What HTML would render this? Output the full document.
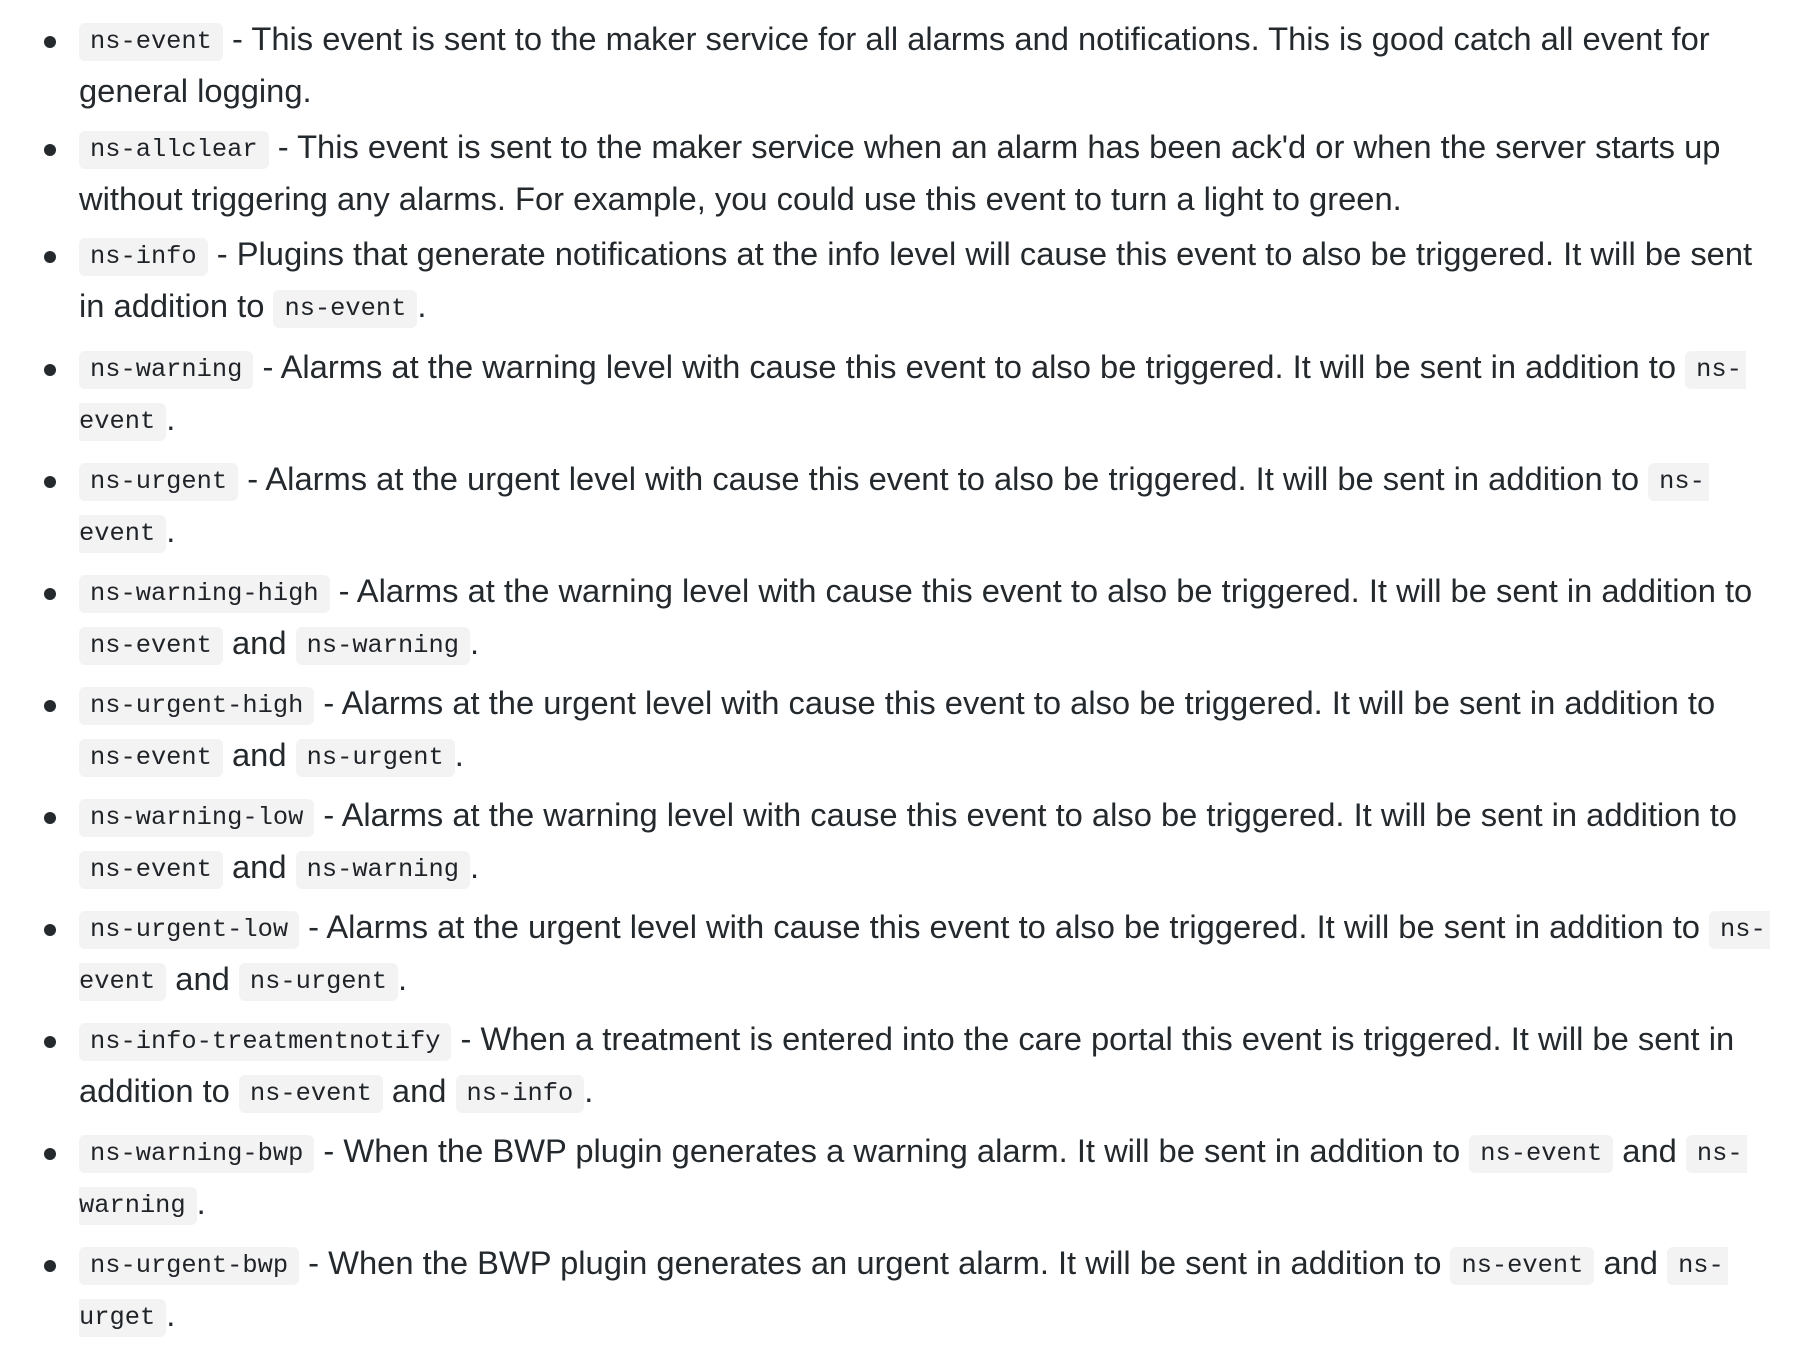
<!DOCTYPE html>
<html><head><meta charset="utf-8"><style>
html,body{margin:0;padding:0;background:#fff;}
body{width:1812px;height:1366px;position:relative;overflow:hidden;font-family:"Liberation Sans",sans-serif;font-size:32.7px;color:#24292e;}
.li{position:absolute;left:79px;margin-top:-3px;}
.li::before{content:"";position:absolute;left:-35px;top:23px;width:12px;height:12px;border-radius:50%;background:#24292e;}
.l{height:52px;line-height:52px;white-space:nowrap;}
code{font-family:"Liberation Mono",monospace;font-size:25.4px;background:#f3f3f3;border-radius:6px;display:inline-block;height:38px;line-height:38px;padding:0 11px;vertical-align:middle;position:relative;top:1px;color:#1f2328;}
code.e{border-radius:6px 0 0 6px;padding-right:4px;}
code.s{border-radius:0 6px 6px 0;padding-left:0;}
</style></head><body>
<div class="li" style="top:16px"><div class="l"><code>ns-event</code> - This event is sent to the maker service for all alarms and notifications. This is good catch all event for</div><div class="l">general logging.</div></div>
<div class="li" style="top:124px"><div class="l"><code>ns-allclear</code> - This event is sent to the maker service when an alarm has been ack'd or when the server starts up</div><div class="l">without triggering any alarms. For example, you could use this event to turn a light to green.</div></div>
<div class="li" style="top:231px"><div class="l"><code>ns-info</code> - Plugins that generate notifications at the info level will cause this event to also be triggered. It will be sent</div><div class="l">in addition to <code>ns-event</code>.</div></div>
<div class="li" style="top:344px"><div class="l"><code>ns-warning</code> - Alarms at the warning level with cause this event to also be triggered. It will be sent in addition to <code class="e">ns-</code></div><div class="l"><code class="s">event</code>.</div></div>
<div class="li" style="top:456px"><div class="l"><code>ns-urgent</code> - Alarms at the urgent level with cause this event to also be triggered. It will be sent in addition to <code class="e">ns-</code></div><div class="l"><code class="s">event</code>.</div></div>
<div class="li" style="top:568px"><div class="l"><code>ns-warning-high</code> - Alarms at the warning level with cause this event to also be triggered. It will be sent in addition to</div><div class="l"><code>ns-event</code> and <code>ns-warning</code>.</div></div>
<div class="li" style="top:680px"><div class="l"><code>ns-urgent-high</code> - Alarms at the urgent level with cause this event to also be triggered. It will be sent in addition to</div><div class="l"><code>ns-event</code> and <code>ns-urgent</code>.</div></div>
<div class="li" style="top:792px"><div class="l"><code>ns-warning-low</code> - Alarms at the warning level with cause this event to also be triggered. It will be sent in addition to</div><div class="l"><code>ns-event</code> and <code>ns-warning</code>.</div></div>
<div class="li" style="top:904px"><div class="l"><code>ns-urgent-low</code> - Alarms at the urgent level with cause this event to also be triggered. It will be sent in addition to <code class="e">ns-</code></div><div class="l"><code class="s">event</code> and <code>ns-urgent</code>.</div></div>
<div class="li" style="top:1016px"><div class="l"><code>ns-info-treatmentnotify</code> - When a treatment is entered into the care portal this event is triggered. It will be sent in</div><div class="l">addition to <code>ns-event</code> and <code>ns-info</code>.</div></div>
<div class="li" style="top:1128px"><div class="l"><code>ns-warning-bwp</code> - When the BWP plugin generates a warning alarm. It will be sent in addition to <code>ns-event</code> and <code class="e">ns-</code></div><div class="l"><code class="s">warning</code>.</div></div>
<div class="li" style="top:1240px"><div class="l"><code>ns-urgent-bwp</code> - When the BWP plugin generates an urgent alarm. It will be sent in addition to <code>ns-event</code> and <code class="e">ns-</code></div><div class="l"><code class="s">urget</code>.</div></div>
</body></html>
